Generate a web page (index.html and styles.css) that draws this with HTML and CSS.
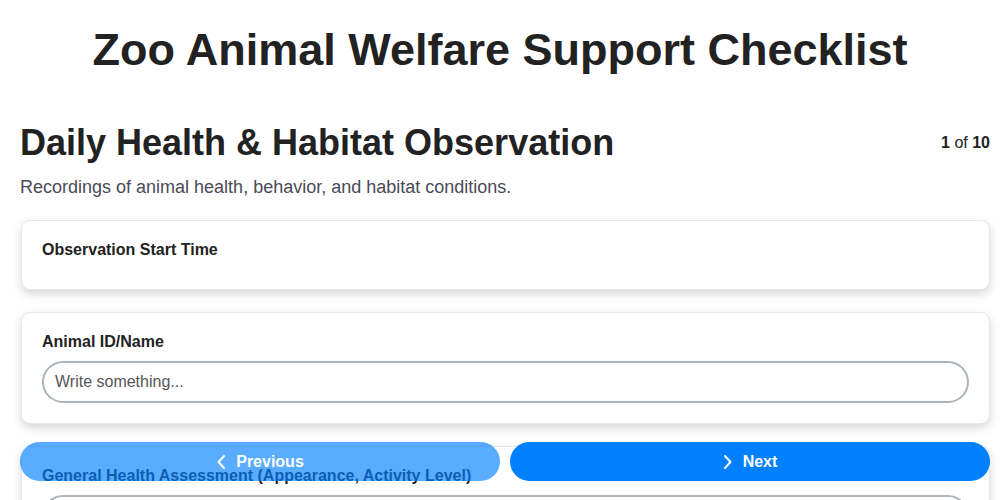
FILE: index.html
```html
<!DOCTYPE html>
<html lang="en">
<head>
<meta charset="utf-8">
<title>Zoo Animal Welfare Support Checklist</title>
<link rel="stylesheet" href="styles.css">
</head>
<body>
<h1 class="title">Zoo Animal Welfare Support Checklist</h1>
<main class="page">
  <div class="section-head">
    <h2 class="section-title">Daily Health &amp; Habitat Observation</h2>
    <div class="counter"><b>1</b> of <b>10</b></div>
  </div>
  <p class="section-desc">Recordings of animal health, behavior, and habitat conditions.</p>

  <div class="card">
    <label class="field-label">Observation Start Time</label>
  </div>

  <div class="card">
    <label class="field-label">Animal ID/Name</label>
    <input class="text-input" type="text" placeholder="Write something...">
  </div>

  <div class="card">
    <label class="field-label">General Health Assessment (Appearance, Activity Level)</label>
    <input class="text-input" type="text" placeholder="Write something...">
  </div>
</main>

<nav class="nav-bar">
  <button class="nav-btn prev" disabled>
    <svg width="10" height="16" viewBox="0 0 10 16" aria-hidden="true"><path d="M8 2 L2.5 8 L8 14" fill="none" stroke="#fff" stroke-width="2" stroke-linecap="round" stroke-linejoin="round"/></svg>
    <span>Previous</span>
  </button>
  <button class="nav-btn next">
    <svg width="10" height="16" viewBox="0 0 10 16" aria-hidden="true"><path d="M2 2 L7.5 8 L2 14" fill="none" stroke="#fff" stroke-width="2" stroke-linecap="round" stroke-linejoin="round"/></svg>
    <span>Next</span>
  </button>
</nav>
</body>
</html>
```

FILE: styles.css
```css
* { box-sizing: border-box; }

html, body {
  margin: 0;
  padding: 0;
  background: #fff;
  font-family: "Liberation Sans", Arial, sans-serif;
  color: #222;
}

.title {
  margin: 0;
  padding-top: 24px;
  height: 119px;
  text-align: center;
  font-size: 45px;
  line-height: 52px;
  font-weight: bold;
  color: #222;
}

.page {
  margin: 0 10px 0 20px;
}

.section-head {
  display: flex;
  justify-content: space-between;
  align-items: center;
  height: 48px;
}

.section-title {
  margin: 0;
  font-size: 36px;
  line-height: 42px;
  font-weight: bold;
}

.counter {
  font-size: 16px;
  color: #222;
}

.section-desc {
  margin: 8px 0 21px;
  font-size: 18px;
  line-height: 24px;
  color: #4a4a58;
}

.card {
  background: #fff;
  border: 1px solid #e6e6ee;
  border-radius: 9px;
  padding: 20px;
  margin: 0 0 22px 1px;
  box-shadow: 0 4px 10px rgba(0, 0, 0, 0.16);
}

.field-label {
  display: block;
  font-size: 16px;
  line-height: 18px;
  font-weight: bold;
  color: #222;
  margin-bottom: 10px;
}

.text-input {
  display: block;
  width: 100%;
  height: 42px;
  border: 2px solid #aeb4bb;
  border-radius: 21px;
  padding: 0 11px;
  font-family: "Liberation Sans", Arial, sans-serif;
  font-size: 16px;
  color: #222;
  background: #fff;
  outline: none;
}

.text-input::placeholder {
  color: #555;
}

.nav-bar {
  position: fixed;
  left: 20px;
  right: 10px;
  bottom: 19px;
  display: flex;
  gap: 10px;
}

.nav-btn {
  flex: 1;
  height: 39px;
  border: none;
  border-radius: 20px;
  background: #0080ff;
  color: #fff;
  font-family: "Liberation Sans", Arial, sans-serif;
  font-size: 16px;
  font-weight: bold;
  display: flex;
  align-items: center;
  justify-content: center;
  gap: 10px;
  padding: 0;
}

.nav-btn.prev {
  opacity: 0.65;
}
```
